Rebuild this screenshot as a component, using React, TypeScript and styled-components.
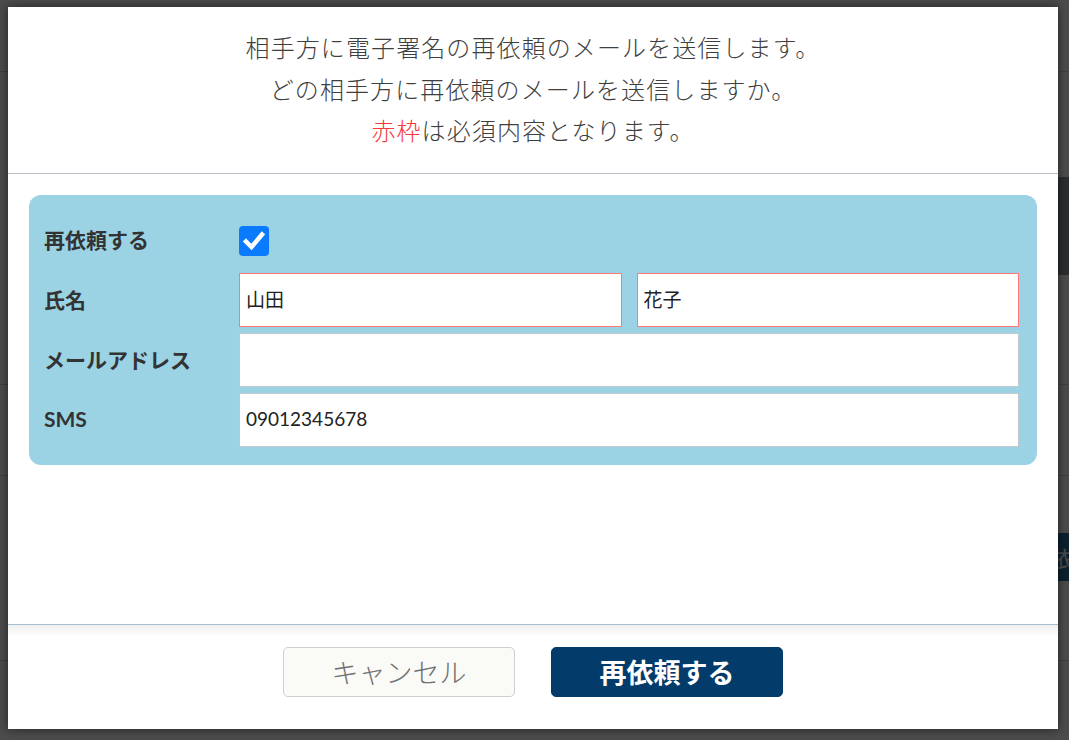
import React from "react";
import styled, { createGlobalStyle } from "styled-components";

const GlobalStyle = createGlobalStyle`
  html, body {
    margin: 0;
    padding: 0;
    background: #ffffff;
  }
  body {
    font-family: "Noto Sans CJK JP", "Noto Sans", sans-serif;
    color: #333;
  }
  * {
    box-sizing: border-box;
  }
`;

const Page = styled.div`
  position: relative;
  width: 1069px;
  height: 740px;
  overflow: hidden;
  background: #ffffff;
`;

/* page content sitting behind the dimmed overlay */
const BackPage = styled.div`
  display: flex;
  flex-direction: column;
`;

const BackRow = styled.div<{ h: number; line?: boolean }>`
  height: ${(p) => p.h}px;
  border-bottom: ${(p) => (p.line ? "1px solid #d6d6d6" : "none")};
  display: flex;
  justify-content: flex-end;
  align-items: stretch;
`;

const BackBand = styled.div`
  width: 40px;
  background: #8e9ba5;
`;

const BackButton = styled.div`
  width: 40px;
  background: #2d6c9a;
  color: #fff;
  font-size: 22px;
  display: flex;
  align-items: center;
  overflow: hidden;
  white-space: nowrap;
`;

const Overlay = styled.div`
  position: absolute;
  inset: 0;
  background: rgba(0, 0, 0, 0.7);
  display: flex;
  padding: 7px 11px 11px 8px;
`;

const Modal = styled.div`
  flex: 1;
  background: #ffffff;
  display: flex;
  flex-direction: column;
  box-shadow: 0 0 10px rgba(0, 0, 0, 0.55);
`;

const Header = styled.div`
  padding: 19px 0 22px;
  border-bottom: 1px solid #b9c0c7;
  text-align: center;
  font-size: 24px;
  letter-spacing: 1.1px;
  line-height: 41.5px;
  font-weight: 300;
  color: #3f3f3f;
`;

const Red = styled.span`
  color: #f43a3a;
`;

const Body = styled.div`
  flex: 1;
  padding: 21px 21px 0;
`;

const Panel = styled.div`
  background: #9bd3e5;
  border-radius: 12px;
  padding: 18px 18px 18px 15px;
  display: flex;
  flex-direction: column;
  gap: 6px;
`;

const Row = styled.div`
  display: grid;
  grid-template-columns: 195px 1fr;
  height: 54px;
  align-items: center;
`;

const Label = styled.div`
  font-family: "Lato", "Noto Sans CJK JP", sans-serif;
  font-size: 21px;
  font-weight: 700;
  color: #333;
  margin-top: -2px;
`;

const Fields = styled.div`
  display: flex;
  gap: 15px;
  height: 100%;
`;

const Input = styled.input<{ required?: boolean }>`
  flex: 1;
  min-width: 0;
  height: 54px;
  border: 1px solid ${(p) => (p.required ? "#ff7878" : "#c3c7cb")};
  border-radius: 0;
  background: #fff;
  padding: 0 0 2px 6px;
  font-family: "Lato", "Noto Sans CJK JP", sans-serif;
  font-size: 19px;
  color: #222;
  outline: none;
`;

const CheckBox = styled.div`
  width: 30px;
  height: 30px;
  border-radius: 4px;
  background: #0a7bff;
  display: flex;
  align-items: center;
  justify-content: center;
  margin-top: 2px;
`;

const Footer = styled.div`
  height: 105px;
  border-top: 1px solid #a7bdcd;
  background: linear-gradient(#f0f0f0, #ffffff 12px);
  display: flex;
  justify-content: center;
  gap: 36px;
  padding-top: 22px;
`;

const Button = styled.button<{ primary?: boolean }>`
  width: 232px;
  height: 50px;
  border-radius: 5px;
  border: 1px solid ${(p) => (p.primary ? "#033c6b" : "#cfcfcf")};
  background: ${(p) => (p.primary ? "#033c6b" : "#fafaf7")};
  color: ${(p) => (p.primary ? "#ffffff" : "#707070")};
  font-family: "Noto Sans CJK JP", sans-serif;
  font-size: 27px;
  font-weight: ${(p) => (p.primary ? 700 : 300)};
  padding: 0 0 2px;
  cursor: pointer;
`;

const App: React.FC = () => {
  return (
    <Page>
      <GlobalStyle />
      <BackPage>
        <BackRow h={72} line />
        <BackRow h={105} />
        <BackRow h={98}>
          <BackBand />
        </BackRow>
        <BackRow h={110} line />
        <BackRow h={91} line />
        <BackRow h={57} />
        <BackRow h={48}>
          <BackButton>再依</BackButton>
        </BackRow>
        <BackRow h={80} line />
      </BackPage>
      <Overlay>
        <Modal>
          <Header>
            相手方に電子署名の再依頼のメールを送信します。
            <br />
            どの相手方に再依頼のメールを送信しますか。
            <br />
            <Red>赤枠</Red>は必須内容となります。
          </Header>
          <Body>
            <Panel>
              <Row>
                <Label>再依頼する</Label>
                <CheckBox>
                  <svg width="24" height="24" viewBox="0 0 24 24">
                    <path
                      d="M4 12.5 L9.5 18 L20 5.5"
                      fill="none"
                      stroke="#fff"
                      strokeWidth="4.5"
                      strokeLinecap="square"
                    />
                  </svg>
                </CheckBox>
              </Row>
              <Row>
                <Label>氏名</Label>
                <Fields>
                  <Input required defaultValue="山田" />
                  <Input required defaultValue="花子" />
                </Fields>
              </Row>
              <Row>
                <Label>メールアドレス</Label>
                <Fields>
                  <Input defaultValue="" />
                </Fields>
              </Row>
              <Row>
                <Label>SMS</Label>
                <Fields>
                  <Input defaultValue="09012345678" />
                </Fields>
              </Row>
            </Panel>
          </Body>
          <Footer>
            <Button>キャンセル</Button>
            <Button primary>再依頼する</Button>
          </Footer>
        </Modal>
      </Overlay>
    </Page>
  );
};

export default App;
